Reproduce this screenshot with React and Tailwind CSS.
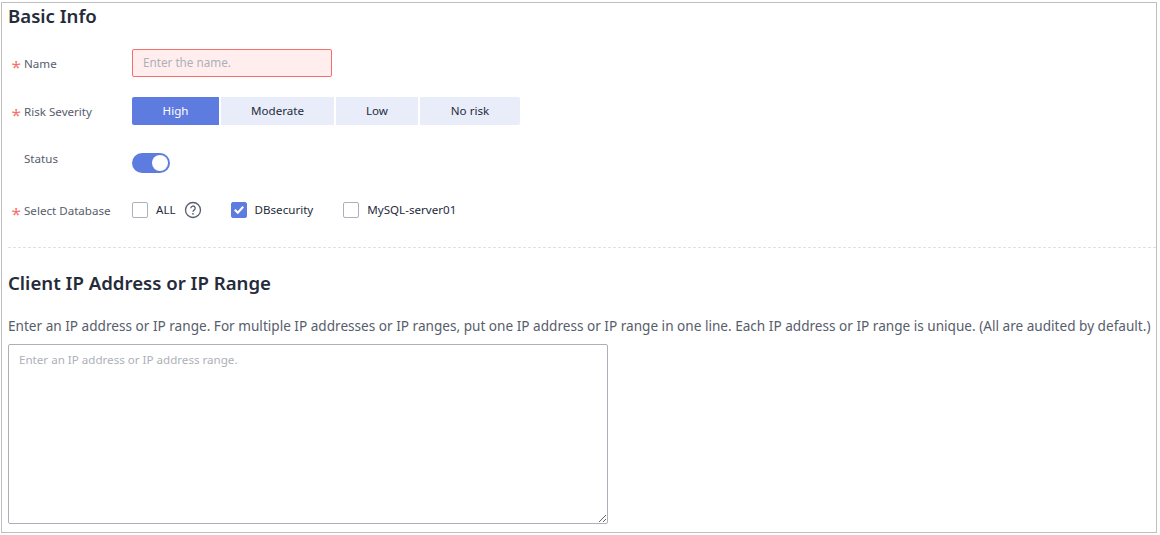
function Label({ req, children, className = "pt-[2px]" }) {
  return (
    <div className={`flex items-center w-[124px] shrink-0 pl-[3px] text-[11.6px] text-[#575d6c] ${className}`}>
      <span className="h-[14px] w-[13px] shrink-0 pl-[0.5px] text-[#f66f6a] text-[17px] leading-[20px]">{req ? "*" : ""}</span>
      <span>{children}</span>
    </div>
  );
}
function Check({ checked, label }) {
  return (
    <div className="flex items-center">
      <span className={`flex h-[16px] w-[16px] items-center justify-center rounded-[2px] border ${checked ? "border-[#5e7ce0] bg-[#5e7ce0]" : "border-[#adb0b8] bg-white"}`}>
        {checked && (
          <svg width="12" height="12" viewBox="0 0 12 12" fill="none">
            <path d="M1.8 5.8l3 3 5.4-6" stroke="white" strokeWidth="2.1" />
          </svg>
        )}
      </span>
      <span className="ml-[8px] text-[11.6px] text-[#252b3a]">{label}</span>
    </div>
  );
}
export default function App() {
  return (
    <div className="h-[535px] w-[1160px] bg-white pt-[2px] pl-[1px] font-['Noto_Sans','Open_Sans',sans-serif] overflow-hidden">
      <div className="h-[531px] w-[1156px] border border-[#bfbfbf] pl-[6px]">
        <h2 className="text-[18.6px] leading-[26px] font-semibold text-[#252b3a]">Basic Info</h2>
        <div className="mt-[20px] flex items-center h-[28px]">
          <Label req>Name</Label>
          <div className="flex h-[28px] w-[200px] items-center rounded-[2px] border border-[#f66f6a] bg-[#ffeeed] px-[10px] text-[11.7px] text-[#adb0b8]">Enter the name.</div>
        </div>
        <div className="mt-[20px] flex items-center h-[28px]">
          <Label req>Risk Severity</Label>
          <div className="flex h-[28px] gap-[2px] text-[11.6px] text-[#252b3a]">
            <div className="flex w-[87px] items-center justify-center rounded-l-[2px] bg-[#5e7ce0] text-white">High</div>
            <div className="flex w-[113px] items-center justify-center bg-[#e9edfa]">Moderate</div>
            <div className="flex w-[82px] items-center justify-center bg-[#e9edfa]">Low</div>
            <div className="flex w-[100px] items-center justify-center rounded-r-[2px] bg-[#e9edfa]">No risk</div>
          </div>
        </div>
        <div className="mt-[22px] flex items-start h-[28px]">
          <Label className="h-[24px]">Status</Label>
          <div className="mt-[6px] flex h-[20px] w-[38px] items-center justify-end rounded-full bg-[#5e7ce0] pr-[2px]">
            <span className="h-[16px] w-[16px] rounded-full bg-white" />
          </div>
        </div>
        <div className="mt-[21px] flex items-center h-[28px]">
          <Label req>Select Database</Label>
          <div className="flex items-center">
            <Check label="ALL" />
            <svg className="ml-[8px]" width="18" height="18" viewBox="0 0 18 18" fill="none" stroke="#575d6c">
              <circle cx="9" cy="9" r="7.5" strokeWidth="1.3" />
              <path d="M6.8 7.2a2.2 2.2 0 1 1 3.3 1.9c-.7.4-1.1.8-1.1 1.6" strokeWidth="1.3" />
              <circle cx="9" cy="12.8" r=".9" fill="#575d6c" stroke="none" />
            </svg>
            <div className="ml-[29px]"><Check checked label="DBsecurity" /></div>
            <div className="ml-[30px]"><Check label="MySQL-server01" /></div>
          </div>
        </div>
        <div className="mt-[23px] border-t border-dashed border-[#dfe1e6]" />
        <h2 className="mt-[22px] text-[18.6px] leading-[26px] font-semibold text-[#252b3a]">Client IP Address or IP Range</h2>
        <p className="mt-[21px] text-[13.6px] leading-[18px] whitespace-nowrap text-[#575d6c]">Enter an IP address or IP range. For multiple IP addresses or IP ranges, put one IP address or IP range in one line. Each IP address or IP range is unique. (All are audited by default.)</p>
        <textarea
          readOnly
          placeholder="Enter an IP address or IP address range."
          className="mt-[9px] block h-[180px] w-[600px] rounded-[2px] border border-[#adb0b8] px-[10px] py-[6px] text-[11.6px] leading-[18px] text-[#252b3a] placeholder:text-[#adb0b8] outline-none"
        />
      </div>
    </div>
  );
}
